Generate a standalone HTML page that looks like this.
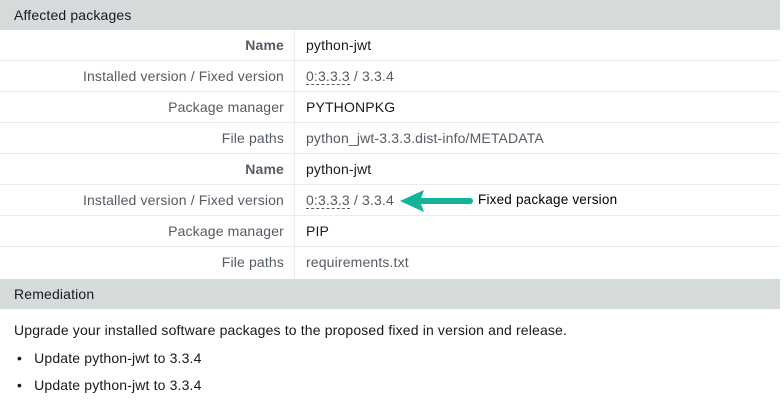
<html><head><style>
body{margin:0;width:784px;height:405px;background:#fff;font-family:"Liberation Sans",sans-serif;font-size:14px;color:#16191f;position:relative;overflow:hidden;letter-spacing:0.15px}
.hd{position:absolute;left:0;width:780px;height:30px;background:#d5dbdb;line-height:31px;padding-left:14px;box-sizing:border-box;color:#16191f}
.row{position:absolute;left:0;width:780px;height:31px;border-bottom:1px solid #eaeded;box-sizing:border-box;line-height:30px}
.l{position:absolute;left:0;width:284px;text-align:right;color:#545b64}
.l.b{font-weight:bold}
.sep{position:absolute;left:294px;top:0;height:31px;border-left:1px solid #eaeded}
.v{position:absolute;left:306px;color:#16191f}
.g{color:#545b64}
.u{border-bottom:1px dashed #545b64;line-height:15px;display:inline-block}
</style></head><body>
<div class="hd" style="top:0">Affected packages</div>
<div class="row" style="top:30px"><span class="l b">Name</span><span class="sep"></span><span class="v">python-jwt</span></div>
<div class="row" style="top:61px"><span class="l">Installed version / Fixed version</span><span class="sep"></span><span class="v g"><span class="u">0:3.3.3</span> / 3.3.4</span></div>
<div class="row" style="top:92px"><span class="l">Package manager</span><span class="sep"></span><span class="v">PYTHONPKG</span></div>
<div class="row" style="top:123px"><span class="l">File paths</span><span class="sep"></span><span class="v g">python_jwt-3.3.3.dist-info/METADATA</span></div>
<div class="row" style="top:154px"><span class="l b">Name</span><span class="sep"></span><span class="v">python-jwt</span></div>
<div class="row" style="top:185px"><span class="l">Installed version / Fixed version</span><span class="sep"></span><span class="v g"><span class="u">0:3.3.3</span> / 3.3.4</span></div>
<div class="row" style="top:216px"><span class="l">Package manager</span><span class="sep"></span><span class="v">PIP</span></div>
<div class="row" style="top:247px;border-bottom:none"><span class="l">File paths</span><span class="sep"></span><span class="v g">requirements.txt</span></div>
<div class="hd" style="top:279px">Remediation</div>
<div style="position:absolute;left:14px;top:322px">Upgrade your installed software packages to the proposed fixed in version and release.</div>
<div style="position:absolute;left:17px;top:350px">•&nbsp;&nbsp;&nbsp;Update python-jwt to 3.3.4</div>
<div style="position:absolute;left:17px;top:377px">•&nbsp;&nbsp;&nbsp;Update python-jwt to 3.3.4</div>
<svg style="position:absolute;left:398px;top:188px" width="76" height="26"><line x1="20" y1="13" x2="72" y2="13" stroke="#13b39a" stroke-width="6" stroke-linecap="round"/><polygon points="2,13 26,2 22,13 26,24" fill="#13b39a"/></svg>
<div style="position:absolute;left:478px;top:192px;font-size:13.5px;color:#000;letter-spacing:0.2px">Fixed package version</div>
</body></html>
